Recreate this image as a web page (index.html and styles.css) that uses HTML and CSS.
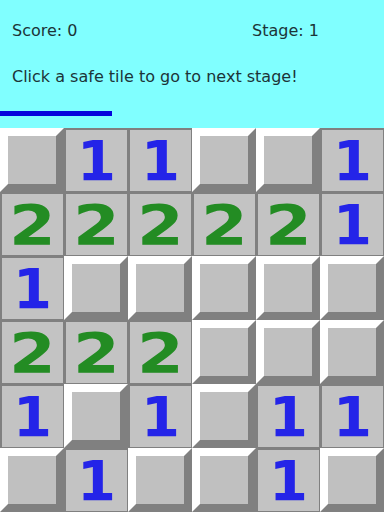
FILE: index.html
```html
<!DOCTYPE html>
<html>
<head>
<meta charset="utf-8">
<link rel="stylesheet" href="styles.css">
</head>
<body>
<div class="header">
  <div class="stats">
    <span class="score">Score: 0</span>
    <span class="stage">Stage: 1</span>
  </div>
  <div class="msg">Click a safe tile to go to next stage!</div>
  <div class="timer"></div>
</div>
<div class="grid">
  <div class="tile"></div>
  <div class="open n1"><span>1</span></div>
  <div class="open n1"><span>1</span></div>
  <div class="tile"></div>
  <div class="tile"></div>
  <div class="open n1"><span>1</span></div>

  <div class="open n2"><span>2</span></div>
  <div class="open n2"><span>2</span></div>
  <div class="open n2"><span>2</span></div>
  <div class="open n2"><span>2</span></div>
  <div class="open n2"><span>2</span></div>
  <div class="open n1"><span>1</span></div>

  <div class="open n1"><span>1</span></div>
  <div class="tile"></div>
  <div class="tile"></div>
  <div class="tile"></div>
  <div class="tile"></div>
  <div class="tile"></div>

  <div class="open n2"><span>2</span></div>
  <div class="open n2"><span>2</span></div>
  <div class="open n2"><span>2</span></div>
  <div class="tile"></div>
  <div class="tile"></div>
  <div class="tile"></div>

  <div class="open n1"><span>1</span></div>
  <div class="tile"></div>
  <div class="open n1"><span>1</span></div>
  <div class="tile"></div>
  <div class="open n1"><span>1</span></div>
  <div class="open n1"><span>1</span></div>

  <div class="tile"></div>
  <div class="open n1"><span>1</span></div>
  <div class="tile"></div>
  <div class="tile"></div>
  <div class="open n1"><span>1</span></div>
  <div class="tile"></div>
</div>
</body>
</html>
```
FILE: styles.css
```css
html, body {
  margin: 0;
  padding: 0;
  background: #c0c0c0;
}
body {
  width: 384px;
  height: 512px;
  overflow: hidden;
  font-family: "DejaVu Sans", Verdana, sans-serif;
}
.header {
  background: #80ffff;
  height: 128px;
  box-sizing: border-box;
  padding-top: 21px;
  color: #1c3438;
  font-size: 16px;
  line-height: 19px;
}
.stats {
  display: flex;
  padding-left: 12px;
}
.score {
  width: 240px;
}
.msg {
  margin-top: 27px;
  padding-left: 12px;
}
.timer {
  margin-top: 25px;
  width: 112px;
  height: 5px;
  background: #0505dc;
}
.grid {
  display: grid;
  grid-template-columns: repeat(6, 64px);
  grid-template-rows: repeat(6, 64px);
}
.tile {
  box-sizing: border-box;
  background: #c0c0c0;
  border: 8px solid;
  border-color: #ffffff #808080 #808080 #ffffff;
}
.open {
  box-sizing: border-box;
  background: #c3c3c3;
  border-style: solid;
  border-color: #808080;
  border-width: 2px 1px 1px 2px;
  display: flex;
  align-items: center;
  justify-content: center;
  font-family: "DejaVu Sans", sans-serif;
  font-weight: bold;
  font-size: 56px;
  line-height: 1;
}
.open span {
  display: inline-block;
}
.n1 {
  color: #2424e8;
}
.n2 {
  color: #238c23;
}
.n2 span {
  transform: scaleX(1.2);
}
```
